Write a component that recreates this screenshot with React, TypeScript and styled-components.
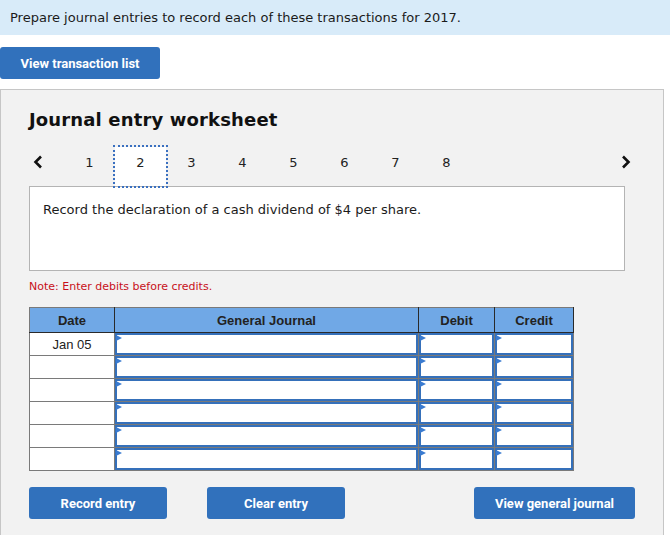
import * as React from "react";
import styled, { createGlobalStyle } from "styled-components";

const GlobalStyle = createGlobalStyle`
  body {
    margin: 0;
    background: #fff;
    font-family: "DejaVu Sans", Verdana, sans-serif;
    color: #1b1b1b;
  }
`;

const Banner = styled.div`
  height: 35px;
  line-height: 35px;
  padding-left: 10px;
  background: #d8ebf9;
  font-size: 13px;
`;

const ActionButton = styled.button<{ $width: number }>`
  width: ${(p) => p.$width}px;
  height: 32px;
  border: none;
  border-radius: 3px;
  background: #3171bc;
  color: #fff;
  font-family: "Liberation Sans Narrow", "Roboto", sans-serif;
  font-weight: 700;
  font-size: 13px;
  padding: 0;
  cursor: pointer;
`;

const TopButtonRow = styled.div`
  margin-top: 12px;
  display: flex;
`;

const Panel = styled.div`
  box-sizing: border-box;
  width: 664px;
  margin-top: 10px;
  border: 1px solid #c6c6c6;
  background: #f2f2f2;
  padding: 18px 28px 24px;
`;

const Title = styled.h2`
  margin: 0;
  font-size: 18px;
  line-height: 24px;
  font-weight: 700;
  letter-spacing: 0.15px;
  color: #111;
`;

const Pager = styled.div`
  margin-top: 15px;
  display: flex;
  align-items: flex-start;
  height: 39px;
`;

const Arrow = styled.button<{ $side: "left" | "right" }>`
  width: 35px;
  height: 39px;
  border: none;
  background: none;
  padding: ${(p) => (p.$side === "left" ? "8px 0 0 4px" : "8px 4px 0 0")};
  margin-left: ${(p) => (p.$side === "right" ? "auto" : "0")};
  display: flex;
  justify-content: ${(p) => (p.$side === "left" ? "flex-start" : "flex-end")};
  cursor: pointer;
`;

const Tab = styled.div<{ $active?: boolean }>`
  position: relative;
  z-index: 1;
  box-sizing: border-box;
  width: 51px;
  height: 39px;
  padding-top: 8px;
  text-align: center;
  font-size: 13px;
  line-height: 16px;
  color: #222;
  background: ${(p) => (p.$active ? "#fff" : "transparent")};
  outline: ${(p) => (p.$active ? "2px dotted #3a70c0" : "none")};
`;

const Prompt = styled.div`
  box-sizing: border-box;
  width: 596px;
  height: 85px;
  border: 1px solid #b4b4b4;
  background: #fff;
  padding: 15px 13px 13px;
  font-size: 13px;
  line-height: 16px;
  color: #1b1b1b;
`;

const Note = styled.div`
  margin-top: 9px;
  font-size: 11px;
  line-height: 14px;
  color: #c8101a;
`;

const Journal = styled.table`
  margin-top: 13px;
  border-collapse: collapse;
  table-layout: fixed;
  border: 1px solid #7a7a7a;
  font-family: "Liberation Sans", Arial, sans-serif;
`;

const HeadCell = styled.th<{ $width: number }>`
  width: ${(p) => p.$width}px;
  height: 24px;
  padding: 0;
  line-height: 15px;
  background: #70a8e6;
  border-right: 1px solid #2a2a2a;
  border-bottom: 1px solid #2a2a2a;
  font-size: 13px;
  font-weight: 700;
  color: #222;
  text-align: center;
`;

const DateCell = styled.td`
  height: 22px;
  padding: 0;
  line-height: 15px;
  border: 1px solid #7a7a7a;
  background: #fff;
  text-align: center;
  font-size: 13px;
  color: #222;
`;

const FieldCell = styled.td`
  height: 22px;
  padding: 0;
  border: 1px solid #7a7a7a;
  background: #fff;
`;

const Field = styled.div`
  position: relative;
  box-sizing: border-box;
  height: 22px;
  border: 2px solid #3570ba;

  &::before {
    content: "";
    position: absolute;
    left: -1px;
    top: 0;
    border-left: 6px solid #3a7bd0;
    border-top: 3px solid transparent;
    border-bottom: 3px solid transparent;
  }
`;

const BottomBar = styled.div`
  margin-top: 16px;
  display: flex;
  gap: 40px;
`;

const Spacer = styled.div`
  flex: 1;
`;

const Chevron: React.FC<{ dir: "left" | "right" }> = ({ dir }) => (
  <svg width="10" height="14" viewBox="0 0 10 14">
    <polyline
      points={dir === "left" ? "8,1.5 2.5,7 8,12.5" : "2,1.5 7.5,7 2,12.5"}
      fill="none"
      stroke="#111"
      strokeWidth="2.6"
    />
  </svg>
);

const rows = ["Jan 05", "", "", "", "", ""];

export default function App() {
  return (
    <>
      <GlobalStyle />
      <Banner>Prepare journal entries to record each of these transactions for 2017.</Banner>
      <TopButtonRow>
        <ActionButton $width={160}>View transaction list</ActionButton>
      </TopButtonRow>
      <Panel>
        <Title>Journal entry worksheet</Title>
        <Pager>
          <Arrow $side="left">
            <Chevron dir="left" />
          </Arrow>
          {[1, 2, 3, 4, 5, 6, 7, 8].map((n) => (
            <Tab key={n} $active={n === 2}>
              {n}
            </Tab>
          ))}
          <Arrow $side="right">
            <Chevron dir="right" />
          </Arrow>
        </Pager>
        <Prompt>Record the declaration of a cash dividend of $4 per share.</Prompt>
        <Note>Note: Enter debits before credits.</Note>
        <Journal>
          <thead>
            <tr>
              <HeadCell $width={84}>Date</HeadCell>
              <HeadCell $width={303}>General Journal</HeadCell>
              <HeadCell $width={75}>Debit</HeadCell>
              <HeadCell $width={78}>Credit</HeadCell>
            </tr>
          </thead>
          <tbody>
            {rows.map((d, i) => (
              <tr key={i}>
                <DateCell>{d}</DateCell>
                <FieldCell>
                  <Field />
                </FieldCell>
                <FieldCell>
                  <Field />
                </FieldCell>
                <FieldCell>
                  <Field />
                </FieldCell>
              </tr>
            ))}
          </tbody>
        </Journal>
        <BottomBar>
          <ActionButton $width={138}>Record entry</ActionButton>
          <ActionButton $width={138}>Clear entry</ActionButton>
          <Spacer />
          <ActionButton $width={161}>View general journal</ActionButton>
        </BottomBar>
      </Panel>
    </>
  );
}
